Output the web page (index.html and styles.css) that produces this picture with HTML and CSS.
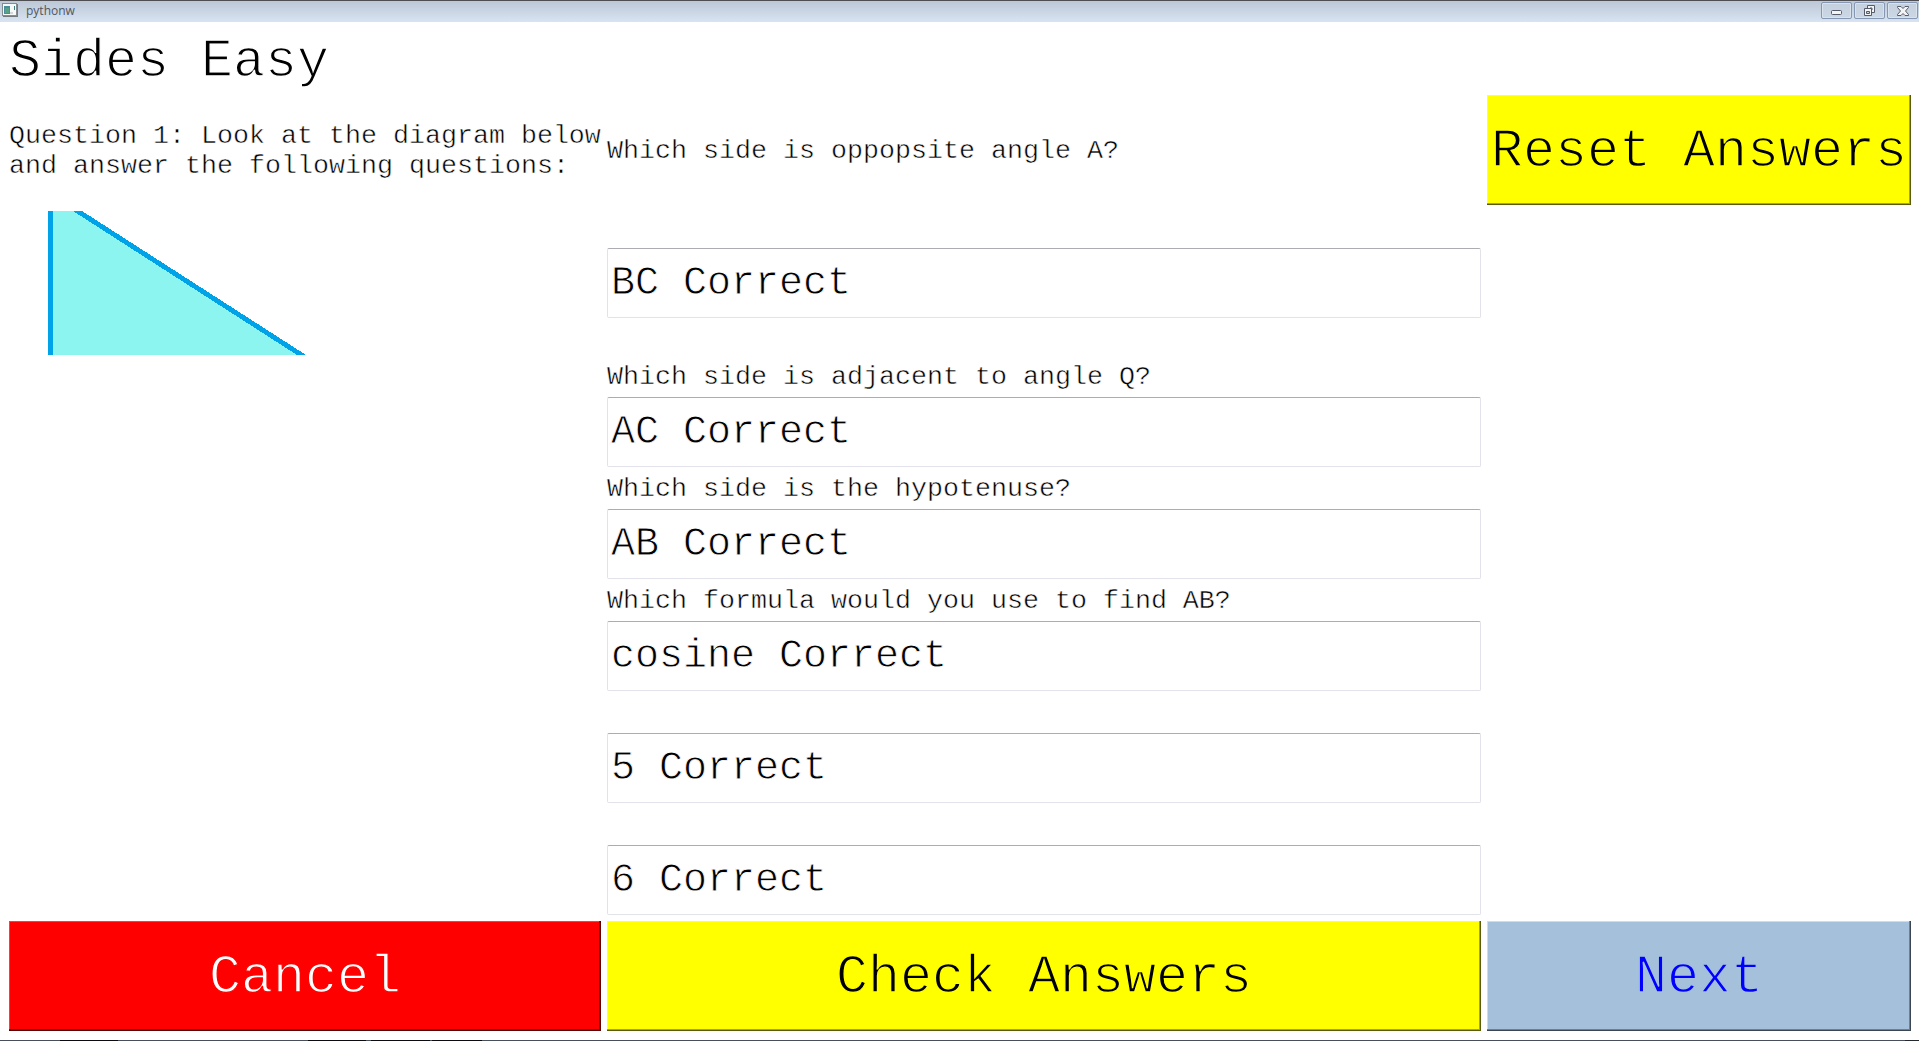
FILE: index.html
```html
<!DOCTYPE html>
<html lang="en">
<head>
<meta charset="utf-8">
<title>pythonw</title>
<link rel="stylesheet" href="styles.css">
</head>
<body>
<header class="titlebar">
  <svg class="app-icon" width="16" height="14" viewBox="0 0 16 14">
    <rect x=".5" y=".5" width="14" height="12" fill="#f7f8f8" stroke="#868b90"/>
    <path d="M1 13.5h15M15.5 1v12" stroke="#747a80" fill="none"/>
    <rect x="2" y="3" width="6" height="8" fill="#4a8e9b"/>
    <rect x="3" y="5" width="4" height="5" fill="#57a287"/>
    <path d="M12.5 3v4" stroke="#3f7f80"/>
    <rect x="8" y="9" width="3" height="2" fill="#d4d7d8"/>
  </svg>
  <span class="app-name">pythonw</span>
  <div class="window-controls">
    <button class="control" aria-label="Minimize"><svg width="30" height="16" viewBox="0 0 30 16"><rect x="10.5" y="8.500" width="10" height="4" rx="1" fill="#f4f4f4" stroke="#555b69"/></svg></button>
    <button class="control" aria-label="Restore"><svg width="30" height="16" viewBox="0 0 30 16"><path d="M13.500 3.500h7v7h-7z" fill="#f4f4f4" stroke="#555b69"/><path d="M16 6h2v2h-2z" fill="#c6d2e0" stroke="#555b69"/><path d="M10.500 6.500h7v7h-7z" fill="#f4f4f4" stroke="#555b69"/><path d="M12.500 9.500h3v2h-3z" fill="#c6d2e0" stroke="#555b69"/></svg></button>
    <button class="control" aria-label="Close"><svg width="30" height="16" viewBox="0 0 30 16"><path d="M10.500 4.500h3.500l2 2 2-2h3.500v1l-3 3.500 3 3.500v1h-3.500l-2-2-2 2h-3.500v-1l3-3.500-3-3.500z" fill="#f4f4f4" stroke="#555b69"/></svg></button>
  </div>
</header>
<main class="quiz">
  <h1 class="title">Sides Easy</h1>
  <p class="intro">Question 1: Look at the diagram below<br>and answer the following questions:</p>
  <p class="question">Which side is oppopsite angle A?</p>
  <button class="action reset">Reset Answers</button>
  <svg class="diagram" width="592" height="144" viewBox="0 0 592 144" shape-rendering="crispEdges">
    <path d="M44 0h25l224 144H44z" fill="#8cf5f0"/>
    <path d="M39 0h5v144h-5z" fill="#00a2e8"/>
    <path d="M64 0h9l224 144h-9z" fill="#00a2e8"/>
  </svg>
  <div class="answer">BC Correct</div>
  <p class="question">Which side is adjacent to angle Q?</p>
  <div class="answer">AC Correct</div>
  <p class="question">Which side is the hypotenuse?</p>
  <div class="answer">AB Correct</div>
  <p class="question">Which formula would you use to find AB?</p>
  <div class="answer">cosine Correct</div>
  <p class="question"></p>
  <div class="answer">5 Correct</div>
  <p class="question"></p>
  <div class="answer">6 Correct</div>
  <button class="action cancel">Cancel</button>
  <button class="action check">Check Answers</button>
  <button class="action next">Next</button>
</main>
<footer class="desktop-edge"></footer>
</body>
</html>
```
FILE: styles.css
```css
* { box-sizing: border-box; }

body {
  margin: 0;
  height: 1041px;
  display: flex;
  flex-direction: column;
  overflow: hidden;
  background: #fff;
  color: #000;
  font-family: "Liberation Mono", "Courier New", monospace;
}

h1, p { margin: 0; font-weight: 400; }

.titlebar {
  height: 22px;
  flex: none;
  display: flex;
  align-items: flex-start;
  border-top: 1px solid #4d4d52;
  background: linear-gradient(#bcc7d7, #d8e4f1);
}

.app-icon { margin: 2px 0 0 2px; }

.app-name {
  margin-left: 8px;
  font: 12px/20px "Open Sans", "Noto Sans", sans-serif;
  color: #50555f;
}

.window-controls {
  margin: 1px 1px 0 auto;
  display: flex;
  gap: 2px;
}

.control {
  width: 31px;
  height: 17px;
  padding: 0;
  display: flex;
  border: 1px solid #8697b3;
  border-radius: 2px;
  background: linear-gradient(#c5d0df, #cbd7e5);
  box-shadow: inset 0 0 0 1px #d9e3ee;
}

.control svg { margin: -1px; }

.quiz {
  flex: 1;
  padding: 9px 8px 9px 9px;
  display: grid;
  grid-template-columns: 592px 1fr 424px;
  grid-template-rows: 58px 110px 144px repeat(5, 30px 70px) 110px;
  gap: 6px;
}

/* A thin outline in the surface colour gives the glyphs a lighter weight. */
.title {
  grid-column: 1 / -1;
  padding-top: 2px;
  font-size: 53.333px;
  line-height: 58px;
  -webkit-text-stroke: 1.3px #fff;
}

.intro, .question {
  align-self: center;
  min-height: 30px;
  padding-top: 1px;
  font-size: 26.667px;
  line-height: 30px;
  white-space: nowrap;
  -webkit-text-stroke: .5px #fff;
}

.question, .answer { grid-column: 2; }

.answer {
  height: 70px;
  align-self: center;
  padding-left: 3px;
  border: 1px solid #e2e3ea;
  border-top-color: #abadb3;
  border-radius: 2px;
  font-size: 40px;
  line-height: 70px;
  white-space: nowrap;
  -webkit-text-stroke: .8px #fff;
}

.action {
  padding: 3px 0 0;
  border: 0;
  font-family: inherit;
  font-size: 53.333px;
  line-height: 60px;
  white-space: nowrap;
}

.reset, .check {
  background: #ff0;
  color: #000;
  -webkit-text-stroke: 1.3px #ff0;
  box-shadow: inset -1px -1px #5a5a00, inset -2px -2px #a9a900, inset 1px 1px #ffff3c;
}

.cancel {
  grid-area: 14 / 1;
  background: #f00;
  color: #fff;
  -webkit-text-stroke: 1.3px #f00;
  box-shadow: inset -1px -1px #500, inset -2px -2px #a80000, inset 1px 1px #ff3c3c;
}

.check { grid-area: 14 / 2; }

.next {
  grid-area: 14 / 3;
  background: #a4c0db;
  color: #00f;
  -webkit-text-stroke: 1.3px #a4c0db;
  box-shadow: inset -1px -1px #3b4651, inset -2px -2px #6d8092, inset 1px 1px #c3e0f8;
}

.desktop-edge {
  height: 1px;
  flex: none;
  background: linear-gradient(90deg, #474f5c 60px, #0b0b10 60px 118px, #474f5c 118px 308px, #0b0b10 308px 366px, #474f5c 366px 371px, #0b0b10 371px 430px, #474f5c 430px 432px, #0b0b10 432px 482px, #474f5c 482px 1905px, #25282e 1905px);
}
```
